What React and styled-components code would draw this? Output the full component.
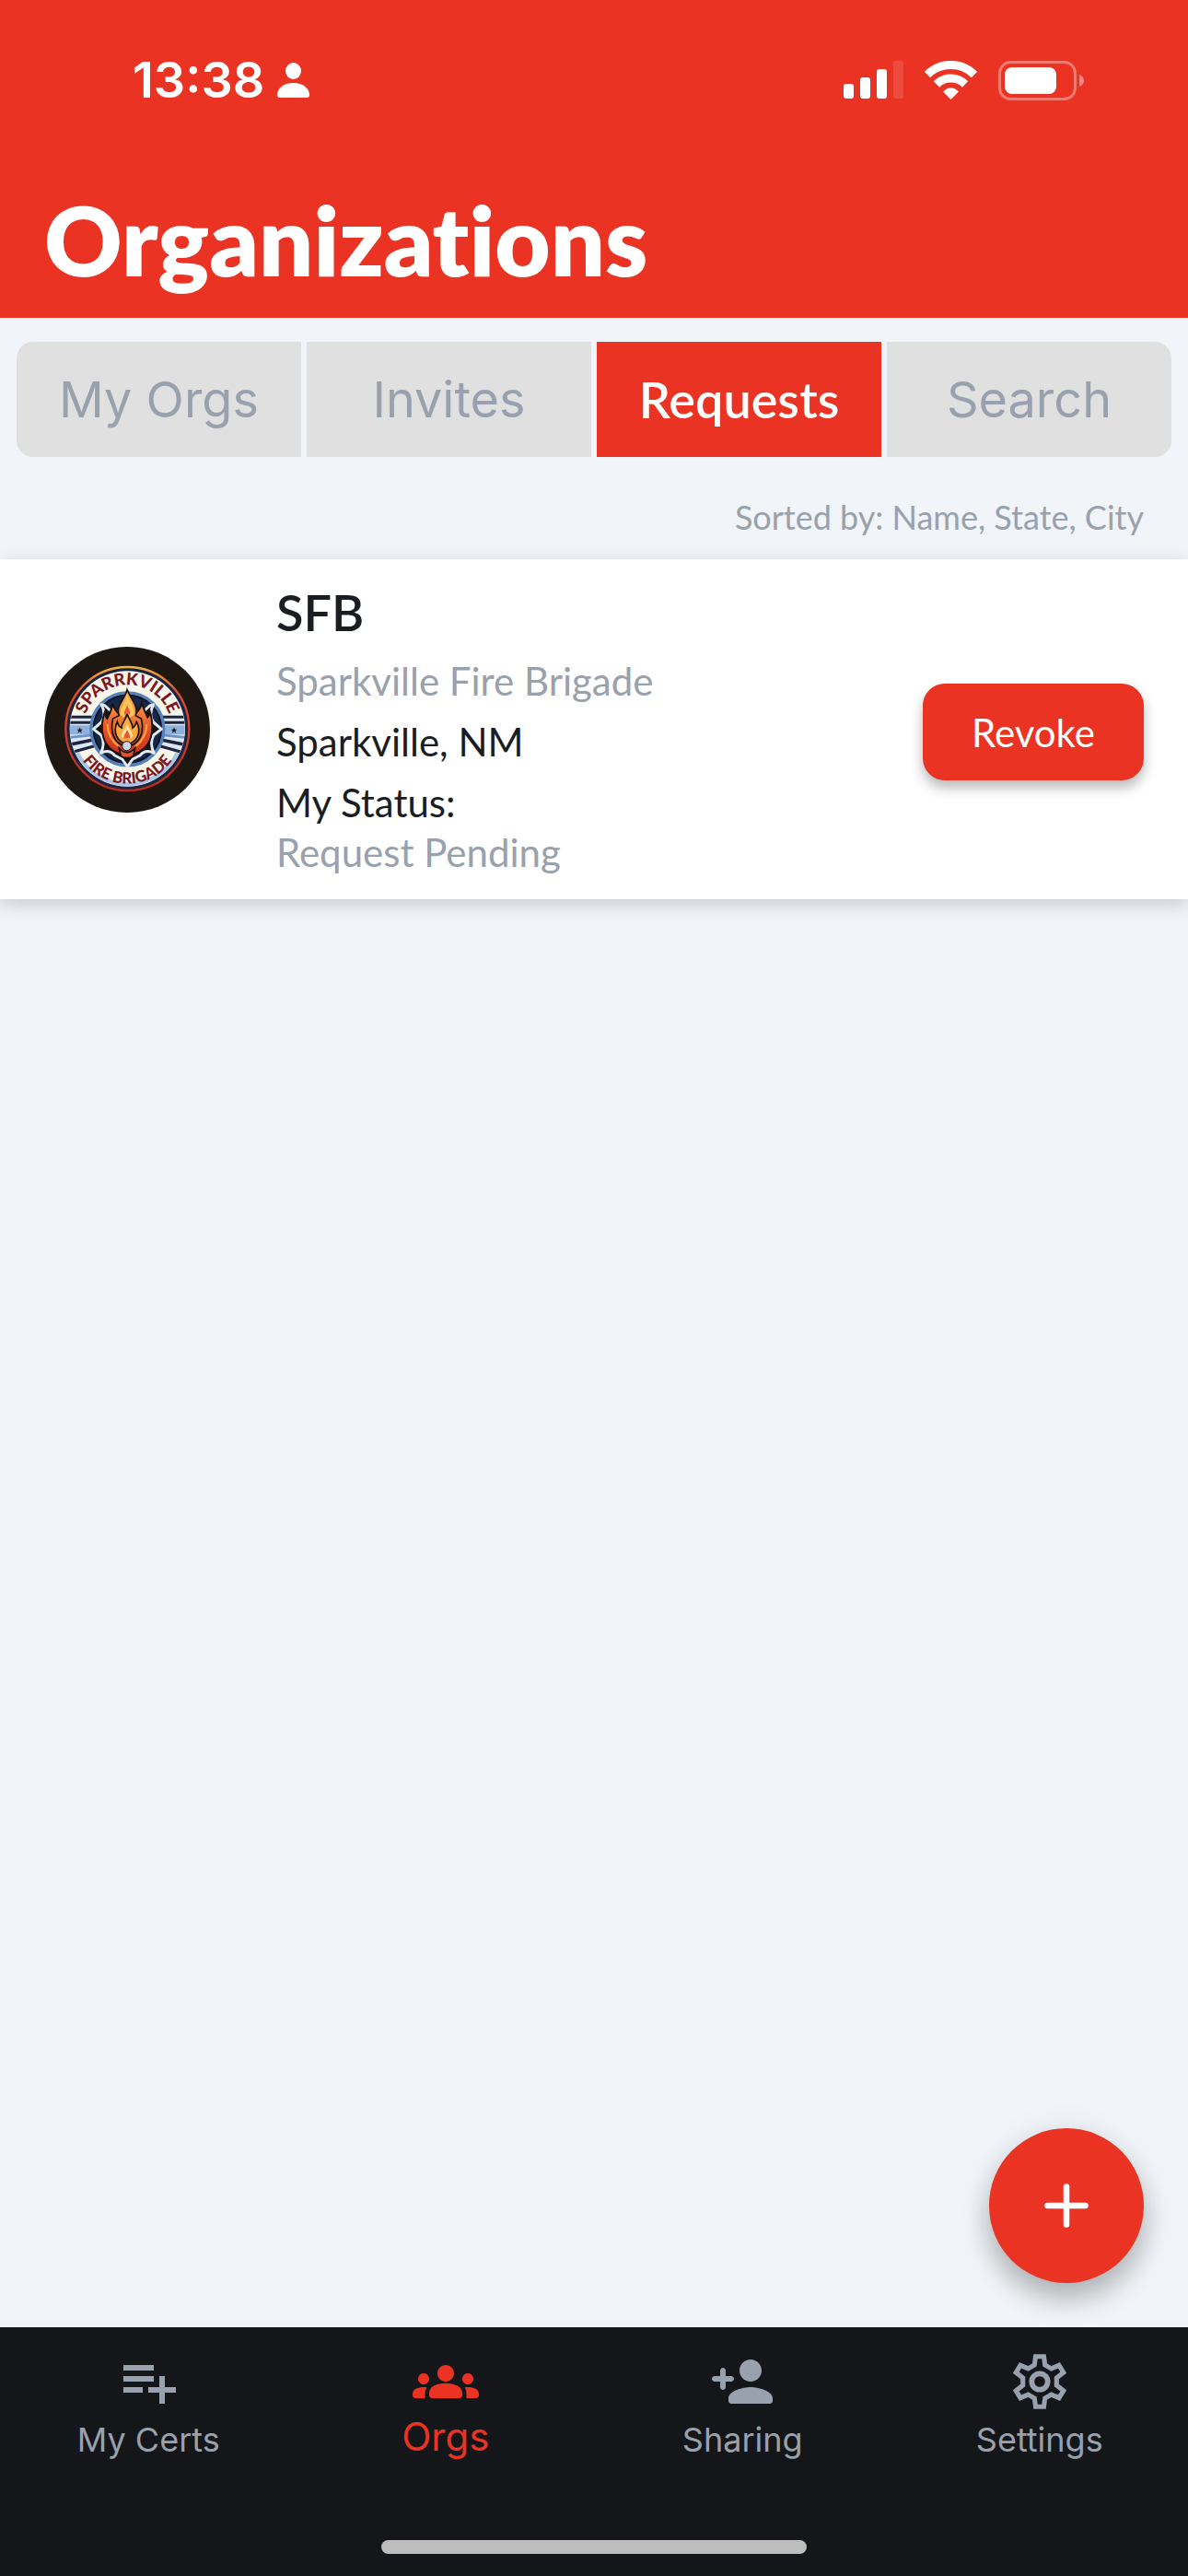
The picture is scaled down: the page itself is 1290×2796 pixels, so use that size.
import React from "react";
import styled, { createGlobalStyle } from "styled-components";
import { MdPlaylistAdd } from "react-icons/md";

const color = {
  red: "#ea3323",
  page: "#f1f4f8",
  grey: "#98a1ad",
  ink: "#1a1d22",
  bar: "#14161a",
  tab: "#e0e0e0",
};
const ui = `Inter, "Noto Sans", sans-serif`;
const brand = `Lato, "Open Sans", sans-serif`;

const Global = createGlobalStyle`
  * { box-sizing: border-box; }
  html, body, #root { height: 100%; }
  body { margin: 0; background: ${color.page}; font-family: ${brand}; }
  button { border: 0; padding: 0; margin: 0; cursor: pointer; }
  h1, h2, p { margin: 0; }
`;

const Screen = styled.div`
  min-height: 100%;
  display: flex;
  flex-direction: column;
  background: ${color.page};
`;

const Header = styled.header`
  background: ${color.red};
  color: #fff;
  padding: 54px 48px 25px;
`;

const StatusBar = styled.div`
  display: flex;
  justify-content: space-between;
  align-items: center;
  height: 66px;
  padding: 0 65px 0 96px;
`;

const Time = styled.div`
  display: flex;
  align-items: center;
  gap: 14px;
  font: 600 54px/66px ${ui};
`;

const Indicators = styled.div`
  display: flex;
  align-items: center;
  gap: 23px;
`;

const Title = styled.h1`
  margin-top: 80px;
  font: 800 104px/120px ${brand};
  font-variant-ligatures: none;
`;

const Tabs = styled.nav`
  display: flex;
  gap: 6px;
  margin: 20px 12px 0;
  border: 6px solid ${color.page};
  border-radius: 24px;
  overflow: hidden;
`;

const Tab = styled.button`
  flex: 1;
  height: 125px;
  background: ${(p) => (p.$active ? color.red : color.tab)};
  color: ${(p) => (p.$active ? "#fff" : color.grey)};
  font: ${(p) => (p.$active ? `600 54px/64px ${brand}` : `400 54px/64px ${ui}`)};
`;

const SortNote = styled.p`
  margin: 36px 48px 23px;
  text-align: right;
  color: ${color.grey};
  font: 400 36px/46px ${brand};
  font-variant-ligatures: none;
`;

const Card = styled.article`
  display: flex;
  align-items: center;
  gap: 72px;
  min-height: 369px;
  padding: 20px 48px;
  background: #fff;
  box-shadow: 0 6px 18px rgba(20, 30, 40, 0.18);
`;

const Details = styled.div`
  flex: 1;
  display: flex;
  flex-direction: column;
  padding-bottom: 2px;
`;

const OrgCode = styled.h2`
  color: ${color.ink};
  font: 600 54px/70px ${brand};
`;

const Line = styled.p`
  color: ${(p) => (p.$muted ? color.grey : color.ink)};
  font: 400 42px/54px ${brand};
  font-variant-ligatures: none;
  margin-top: ${(p) => (p.$tight ? 0 : 12)}px;
`;

const Actions = styled.div`
  padding-top: 6px;
`;

const Revoke = styled.button`
  width: 240px;
  height: 105px;
  border-radius: 24px;
  background: ${color.red};
  color: #fff;
  font: 400 42px/54px ${brand};
  box-shadow: 0 8px 14px rgba(0, 0, 0, 0.28);
`;

const Body = styled.main`
  flex: 1;
  display: flex;
  flex-direction: column;
`;

const FabRow = styled.div`
  display: flex;
  justify-content: flex-end;
  margin-top: auto;
  padding: 0 48px 48px;
`;

const Fab = styled.button`
  display: grid;
  place-items: center;
  width: 168px;
  height: 168px;
  border-radius: 50%;
  background: ${color.red};
  box-shadow: 0 18px 30px rgba(0, 0, 0, 0.24), 0 2px 36px rgba(0, 0, 0, 0.08);
`;

const BottomBar = styled.footer`
  background: ${color.bar};
  padding: 23px 0 24px;
`;

const NavRow = styled.nav`
  display: flex;
`;

const NavItem = styled.a`
  flex: 1;
  display: flex;
  flex-direction: column;
  align-items: center;
  gap: ${(p) => (p.$active ? 0 : 3)}px;
  text-decoration: none;
  color: ${(p) => (p.$active ? color.red : color.grey)};
  font: 400 ${(p) => (p.$active ? 42 : 36)}px/48px ${ui};
  svg { display: block; width: 72px; height: 72px; }
`;

const HomeIndicator = styled.div`
  width: 462px;
  height: 15px;
  margin: 85px auto 0;
  border-radius: 8px;
  background: #bdbdbd;
`;

const PersonIcon = () => (
  <svg width="35" height="38" viewBox="0 0 35 38" fill="#fff" aria-hidden="true">
    <ellipse cx="17.5" cy="9" rx="8.5" ry="9" />
    <path d="M3 38C1 38 0 37 0 35C0 28 7 22 17.500 22S35 28 35 35C35 37 34 38 32 38Z" />
  </svg>
);

const SignalIcon = () => (
  <svg width="65" height="42" viewBox="0 0 65 42" fill="#fff" aria-hidden="true">
    <rect y="25" width="11" height="16" rx="3" />
    <rect x="18" y="18" width="11" height="23" rx="3" />
    <rect x="36" y="9" width="11" height="32" rx="3" />
    <rect x="54" width="11" height="41" rx="3" opacity="0.12" />
  </svg>
);

const WifiIcon = () => (
  <svg width="57" height="42" viewBox="0 0 57 42" aria-hidden="true">
    <g fill="none" stroke="#fff" strokeWidth="9">
      <path d="M3 15A36 36 0 0 1 54 15" />
      <path d="M13 25.500A22 22 0 0 1 44 25.500" />
    </g>
    <path d="M20 33.500Q28.500 25 37 33.500L28.500 42Z" fill="#fff" />
  </svg>
);

const BatteryIcon = () => (
  <svg width="93" height="43" viewBox="0 0 93 43" fill="#fff" aria-hidden="true">
    <rect x="1.5" y="1.5" width="82" height="40" rx="12" fill="none" stroke="#fff" strokeWidth="3" opacity="0.35" />
    <rect x="7" y="7" width="56" height="29" rx="8" />
    <path d="M88 15C91 16 93 18.500 93 21.500S91 27 88 28Z" opacity="0.4" />
  </svg>
);

const GroupsIcon = () => (
  <svg viewBox="0 0 24 24" fill="currentColor" aria-hidden="true">
    <path d="M12 12.600c1.630 0 3.070.39 4.240.9 1.080.48 1.760 1.560 1.760 2.730V17c0 .55-.45 1-1 1H7c-.55 0-1-.45-1-1v-.77c0-1.180.68-2.260 1.760-2.730 1.170-.52 2.610-.9 4.240-.9zM4 13c1.100 0 2-.9 2-2s-.9-2-2-2-2 .9-2 2 .9 2 2 2zm1.130 1.100c-.37-.06-.74-.1-1.130-.1-.99 0-1.930.21-2.780.58C.48 14.900 0 15.620 0 16.430V17c0 .55.45 1 1 1h3.500v-1.610c0-.83.23-1.610.63-2.290zM20 13c1.100 0 2-.9 2-2s-.9-2-2-2-2 .9-2 2 .9 2 2 2zm4 3.430c0-.81-.48-1.530-1.220-1.850-.85-.37-1.790-.58-2.780-.58-.39 0-.76.04-1.130.1.4.68.63 1.460.63 2.290V18H23c.55 0 1-.45 1-1v-.57zM12 6c1.660 0 3 1.340 3 3s-1.340 3-3 3-3-1.340-3-3 1.340-3 3-3z" />
  </svg>
);

const PersonAddIcon = () => (
  <svg viewBox="0 0 24 24" fill="currentColor" aria-hidden="true">
    <path d="M15 12c2.210 0 4-1.790 4-4s-1.790-4-4-4-4 1.790-4 4 1.790 4 4 4zm-9-2V8c0-.55-.45-1-1-1s-1 .45-1 1v2H2c-.55 0-1 .45-1 1s.45 1 1 1h2v2c0 .55.45 1 1 1s1-.45 1-1v-2h2c.55 0 1-.45 1-1s-.45-1-1-1H6zm9 4c-2.670 0-8 1.340-8 4v1c0 .55.45 1 1 1h14c.55 0 1-.45 1-1v-1c0-2.660-5.330-4-8-4z" />
  </svg>
);

const GearIcon = () => (
  <svg viewBox="0 0 24 24" fill="none" stroke="currentColor" strokeWidth="1.7" aria-hidden="true">
    <path d="M10.500 2.900H13.500L13.900 6L16.200 7.300L19 6.100L20.600 8.700L18.100 10.700V13.300L20.600 15.300L19 17.900L16.200 16.700L13.900 18L13.500 21.100H10.500L10.100 18L7.800 16.700L5 17.900L3.400 15.300L5.900 13.300V10.700L3.400 8.700L5 6.100L7.800 7.300L10.100 6Z" />
    <circle cx="12" cy="12" r="2.9" strokeWidth="1.9" />
  </svg>
);

const PlusIcon = () => (
  <svg width="48" height="48" viewBox="0 0 48 48" stroke="#fff" strokeWidth="6.5" strokeLinecap="round" aria-hidden="true">
    <path d="M24 3.500V44.500M3.500 24H44.500" />
  </svg>
);

const BrigadeLogo = () => (
  <svg width="180" height="180" viewBox="54 66 540 540" role="img" aria-label="Sparkville Fire Brigade logo">
    <defs>
      <linearGradient id="rim" x1="0" y1="0" x2="0" y2="1">
        <stop offset="0" stopColor="#f0b040" />
        <stop offset="0.2" stopColor="#e0502c" />
        <stop offset="1" stopColor="#b82a20" />
      </linearGradient>
      <linearGradient id="flame" x1="0" y1="0" x2="0" y2="1">
        <stop offset="0" stopColor="#fbb850" />
        <stop offset="0.45" stopColor="#f08434" />
        <stop offset="1" stopColor="#d5401f" />
      </linearGradient>
      <linearGradient id="side" x1="0" y1="0" x2="0" y2="1">
        <stop offset="0" stopColor="#f59a3c" />
        <stop offset="0.5" stopColor="#e8502a" />
        <stop offset="1" stopColor="#c8301c" />
      </linearGradient>
      <path id="arcTop" d="M181 334A144 144 0 0 1 469 334" />
      <path id="arcBottom" d="M147 334A178 178 0 0 0 503 334" />
      <clipPath id="disc"><circle cx="325" cy="333" r="187" /></clipPath>
    </defs>
    <circle cx="324" cy="336" r="270" fill="#1e1712" />
    <circle cx="325" cy="333" r="201" fill="#1b2440" stroke="url(#rim)" strokeWidth="7" />
    <circle cx="325" cy="333" r="188" fill="#f9f6ec" />
    <g clipPath="url(#disc)">
      <path d="M130 290H240V376L150 420L120 400ZM518 290H408V376L500 420L528 400Z" fill="#dce7f2" />
      <path d="M130 322H240V352H130ZM410 322H520V352H410Z" fill="#8fb2dc" />
      <path d="M130 295H230M130 313H220M428 313H520M418 295H520" stroke="#1b2440" strokeWidth="9" />
      <path d="M130 362L225 352M423 352L520 362" stroke="#6b92c4" strokeWidth="8" />
      <path d="M140 384L228 366M150 408L236 384M508 384L420 366M498 408L412 384" stroke="#1b2440" strokeWidth="10" />
      <path d="M158 414A186 186 0 0 0 492 414" fill="none" stroke="#a9c6e6" strokeWidth="22" />
    </g>
    <circle cx="325" cy="334" r="118" fill="#17274a" stroke="#5580b8" strokeWidth="11" />
    <circle cx="325" cy="334" r="110" fill="none" stroke="#0f1526" strokeWidth="6" />
    <path d="M252 258L240 254Q258 288 240 312L214 334L240 354Q254 382 238 412Q266 398 284 420L308 432L325 456L342 432L366 420Q384 398 412 412Q396 382 410 354L436 334L410 312Q392 288 410 254L398 258L376 278H274Z" fill="#1a1412" stroke="#e3ebf2" strokeWidth="9" strokeLinejoin="round" />
    <path d="M276 250C282 268 292 280 300 286L350 286C358 278 368 268 372 250C380 274 386 286 391 296C397 290 398 280 396 270C414 322 408 372 378 398C360 413 344 418 324 418C304 418 288 413 270 398C240 372 234 322 254 272C252 286 254 294 259 300C266 286 276 270 276 250Z" fill="url(#side)" stroke="#1a120f" strokeWidth="6" />
    <path d="M324 206C338 240 362 258 352 290L370 300C382 350 362 386 324 390C286 386 266 350 278 300L298 290C286 258 314 242 324 206Z" fill="url(#flame)" stroke="#1a120f" strokeWidth="5" />
    <path d="M324 222C334 250 352 266 346 288L334 296L324 280L312 296L302 288C298 266 318 250 324 222Z" fill="#fcc45c" />
    <path d="M324 254C328 268 336 276 332 288L324 280L316 288C312 276 322 268 324 254Z" fill="#e9572e" />
    <path d="M324 284C330 304 342 312 342 330C350 324 354 318 354 308C374 346 356 376 324 384C292 376 276 346 292 310C294 320 298 326 306 330C306 312 320 306 324 284Z" fill="#fba83e" stroke="#1a120f" strokeWidth="5" />
    <path d="M324 314C326 334 346 340 340 362H306C302 340 322 334 324 314Z" fill="#fde39a" />
    <path d="M324 336C328 346 336 352 332 364H314C312 352 322 346 324 336Z" fill="#e9572e" />
    <path d="M260 318C260 350 274 372 298 392M388 318C388 350 374 372 350 392" fill="none" stroke="#f7a040" strokeWidth="7" />
    <path d="M298 396Q324 424 350 396L344 422Q324 434 304 422Z" fill="#df5427" stroke="#1a120f" strokeWidth="5" />
    <circle cx="323" cy="389" r="15" fill="#c9d6e4" stroke="#1a120f" strokeWidth="3" />
    <path d="M170 328L173 335L180 335L174 340L177 347L170 343L163 347L166 340L160 335L167 335ZM477 328L480 335L487 335L481 340L484 347L477 343L470 347L473 340L467 335L474 335Z" fill="#151b2c" />
    <g fill="#7d1620" fontFamily="Lato, sans-serif" fontWeight="900" textAnchor="middle">
      <text fontSize="55"><textPath href="#arcTop" startOffset="50%">SPARRKVILLE</textPath></text>
      <text fontSize="51"><textPath href="#arcBottom" startOffset="50%">FIRE BRIGADE</textPath></text>
    </g>
  </svg>
);

const tabs = ["My Orgs", "Invites", "Requests", "Search"];
const navItems = [
  { label: "My Certs", Icon: MdPlaylistAdd },
  { label: "Orgs", Icon: GroupsIcon },
  { label: "Sharing", Icon: PersonAddIcon },
  { label: "Settings", Icon: GearIcon },
];

export default function App() {
  return (
    <Screen>
      <Global />
      <Header>
        <StatusBar>
          <Time>13:38 <PersonIcon /></Time>
          <Indicators><SignalIcon /><WifiIcon /><BatteryIcon /></Indicators>
        </StatusBar>
        <Title>Organizations</Title>
      </Header>
      <Body>
        <Tabs>
          {tabs.map((t) => <Tab key={t} type="button" $active={t === "Requests"}>{t}</Tab>)}
        </Tabs>
        <SortNote>Sorted by: Name, State, City</SortNote>
        <Card>
          <BrigadeLogo />
          <Details>
            <OrgCode>SFB</OrgCode>
            <Line $muted>Sparkville Fire Brigade</Line>
            <Line>Sparkville, NM</Line>
            <Line>My Status:</Line>
            <Line $muted $tight>Request Pending</Line>
          </Details>
          <Actions>
            <Revoke type="button">Revoke</Revoke>
          </Actions>
        </Card>
        <FabRow>
          <Fab type="button" aria-label="Add organization"><PlusIcon /></Fab>
        </FabRow>
      </Body>
      <BottomBar>
        <NavRow>
          {navItems.map(({ label, Icon }) => (
            <NavItem key={label} href={`#${label}`} $active={label === "Orgs"}>
              <Icon />{label}
            </NavItem>
          ))}
        </NavRow>
        <HomeIndicator />
      </BottomBar>
    </Screen>
  );
}
